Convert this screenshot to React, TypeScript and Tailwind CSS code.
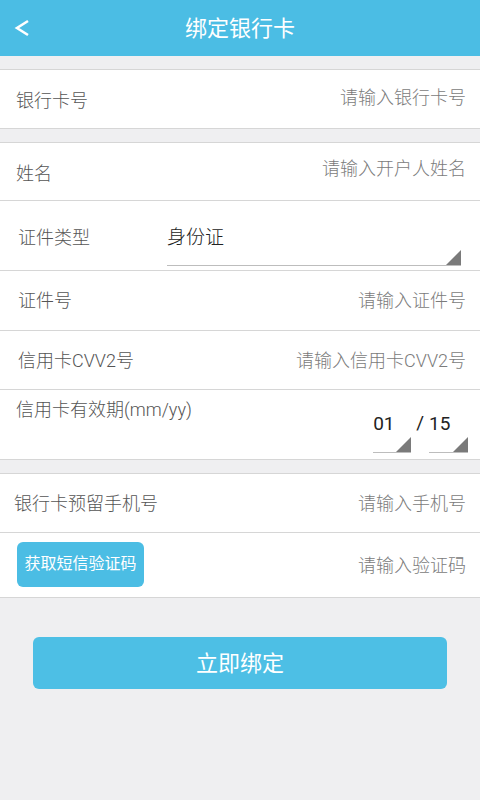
import React from "react";

const font = { fontFamily: '"Roboto", "Noto Sans CJK SC", sans-serif' };

function Corner({ className = "" }: { className?: string }) {
  return (
    <svg className={className} width="15" height="15" viewBox="0 0 15 15">
      <polygon points="15,0 15,15 0,15" fill="#7a7a7a" />
    </svg>
  );
}

function Row({
  label,
  placeholder,
  h = "h-[59px]",
  border = true,
  labelClass = "pl-4",
}: {
  label: string;
  placeholder: string;
  h?: string;
  border?: boolean;
  labelClass?: string;
}) {
  return (
    <div
      className={`flex items-center justify-between pr-[14px] ${h} ${
        border ? "border-b border-[#d6d6d6]" : ""
      }`}
    >
      <span className={`text-[18px] font-light text-[#555] ${labelClass}`}>{label}</span>
      <span className="text-[18px] font-light text-[#7b7b7b]">{placeholder}</span>
    </div>
  );
}

export default function App() {
  return (
    <div className="min-h-[800px] w-[480px] bg-[#efeff1]" style={font}>
      <div className="relative flex h-[56px] items-center justify-center bg-[#4bbde4]">
        <svg className="absolute left-[14px] top-[19px]" width="16" height="18" viewBox="0 0 16 18">
          <path d="M14 2 L3 9 L14 16" fill="none" stroke="#fff" strokeWidth="2.6" />
        </svg>
        <span className="text-[22px] text-white">绑定银行卡</span>
      </div>

      <div className="mt-[13px] border-y border-[#d6d6d6] bg-white">
        <div className="flex h-[58px] items-center justify-between pr-[14px]">
          <span className="pl-4 pt-[3px] text-[18px] font-light text-[#555]">银行卡号</span>
          <span className="pb-[3px] text-[18px] font-light text-[#7b7b7b]">请输入银行卡号</span>
        </div>
      </div>

      <div className="mt-[13px] border-y border-[#d6d6d6] bg-white">
        <div className="flex h-[58px] items-center justify-between border-b border-[#d6d6d6] pr-[14px]">
          <span className="pl-4 pt-[3px] text-[18px] font-light text-[#555]">姓名</span>
          <span className="pb-[6px] text-[18px] font-light text-[#7b7b7b]">请输入开户人姓名</span>
        </div>
        <div className="flex h-[70px] border-b border-[#d6d6d6]">
          <span className="w-[167px] pl-[18px] pt-[23px] text-[18px] font-light text-[#555]">证件类型</span>
          <div className="mr-[19px] mb-[4px] flex flex-1 flex-col justify-end">
            <span className="mb-[-2px] text-[19px] font-light text-[#222]">身份证</span>
            <div className="flex items-end border-b border-[#bdbdbd]">
              <div className="flex-1" />
              <Corner />
            </div>
          </div>
        </div>
        <Row label="证件号" placeholder="请输入证件号" h="h-[60px]" labelClass="pl-[18px]" />
        <Row label="信用卡CVV2号" placeholder="请输入信用卡CVV2号" labelClass="pl-[18px]" />
        <div className="flex h-[69px] justify-between pr-[12px]">
          <span className="pl-4 pt-[6px] text-[18px] font-light text-[#555]">信用卡有效期(mm/yy)</span>
          <div className="flex items-end pb-[6px]">
            <div className="flex w-[38px] flex-col">
              <span className="mb-[1px] text-[19px] leading-[24px] text-[#222]">01</span>
              <div className="flex justify-end border-b border-[#bdbdbd]">
                <Corner />
              </div>
            </div>
            <span className="mx-[5px] mb-[18px] text-[19px] leading-[24px] text-[#222]">/</span>
            <div className="flex w-[39px] flex-col">
              <span className="mb-[1px] text-[19px] leading-[24px] text-[#222]">15</span>
              <div className="flex justify-end border-b border-[#bdbdbd]">
                <Corner />
              </div>
            </div>
          </div>
        </div>
      </div>

      <div className="mt-[13px] border-y border-[#d6d6d6] bg-white">
        <Row label="银行卡预留手机号" placeholder="请输入手机号" h="h-[59px]" labelClass="pl-[14px]" />
        <div className="flex h-[64px] items-center justify-between pr-[14px]">
          <button className="ml-[17px] mb-[2px] flex h-[45px] w-[127px] items-center justify-center rounded-[6px] bg-[#4bbde4] text-[16px] text-white">
            获取短信验证码
          </button>
          <span className="text-[18px] font-light text-[#7b7b7b]">请输入验证码</span>
        </div>
      </div>

      <div className="mt-[39px] px-[33px]">
        <button className="flex h-[52px] w-full items-center justify-center rounded-[6px] bg-[#4dbfe5] text-[22px] text-white">
          立即绑定
        </button>
      </div>
    </div>
  );
}
